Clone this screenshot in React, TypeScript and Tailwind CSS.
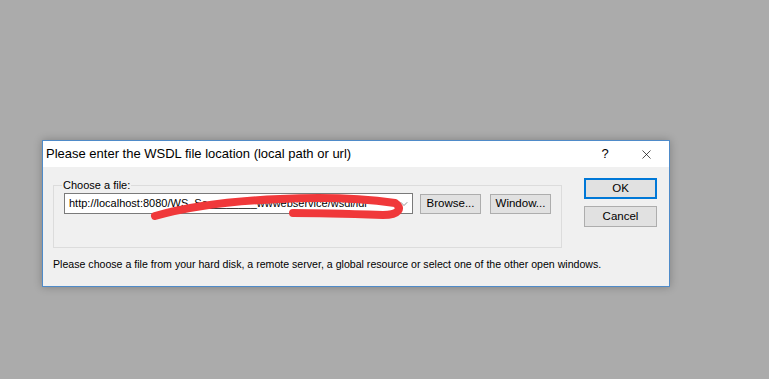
import { X, ChevronDown } from 'lucide-react'

const font = { fontFamily: '"Liberation Sans", Arial, sans-serif' }

function Button({ label, primary }: { label: string; primary?: boolean }) {
  return (
    <div
      className={
        'flex h-full items-center justify-center bg-[#e1e1e1] text-[11.5px] text-black ' +
        (primary ? 'border-2 border-[#0078d7]' : 'border border-[#adadad]')
      }
    >
      {label}
    </div>
  )
}

export default function App() {
  return (
    <div className="h-[379px] w-[769px] bg-[#ababab] pl-[42px] pt-[140px]" style={font}>
      <div className="flex h-[147px] w-[628px] flex-col border border-[#4f8bc9] bg-[#f0f0f0] shadow-[0_0_8px_rgba(0,0,0,0.25)]">
        {/* Title bar */}
        <div className="flex h-[26px] items-center bg-white pl-[3px] pr-[15px]">
          <span className="flex-1 text-[13px] text-black">Please enter the WSDL file location (local path or url)</span>
          <span className="w-[12px] text-center text-[13px] text-black">?</span>
          <X className="ml-[28px] h-[15px] w-[15px] text-black" strokeWidth={1.1} />
        </div>

        {/* Body */}
        <div className="flex flex-1 flex-col px-[10px]">
          <div className="flex pt-[12px]">
            <fieldset className="h-[69px] w-[509px] border border-[#dcdcdc] px-[10px] pt-[2px]">
              <legend className="ml-[-2px] px-[1px] text-[11px] leading-[12px] text-black">Choose a file:</legend>
              <div className="flex items-center">
                <div className="relative flex h-[21px] w-[349px] items-center border border-[#7a7a7a] bg-white pl-[4px]">
                  <span className="flex-1 whitespace-nowrap text-[11px] text-black">
                    http://localhost:8080/WS_Se________wwwebservice/wsdl/ldl
                  </span>
                  <div className="flex h-full w-[16px] items-center justify-center bg-white">
                    <ChevronDown className="h-[12px] w-[12px] text-[#555]" strokeWidth={1.3} />
                  </div>
                  <svg className="absolute left-0 top-0 overflow-visible" width="349" height="21">
                    <path
                      d="M90,22 C125,12 165,7 215,5 C255,3 295,4 330,9 C338,14 334,21 318,21 C288,20 258,19 228,19"
                      fill="none"
                      stroke="#f0383a"
                      strokeWidth="8"
                      strokeLinecap="round"
                      strokeLinejoin="round"
                    />
                  </svg>
                </div>
                <div className="ml-[7px] h-[20px] w-[61px]">
                  <Button label="Browse..." />
                </div>
                <div className="ml-[9px] h-[20px] w-[61px]">
                  <Button label="Window..." />
                </div>
              </div>
            </fieldset>
            <div className="ml-[22px] mt-[-1px] flex w-[73px] flex-col gap-[7px]">
              <div className="h-[21px]">
                <Button label="OK" primary />
              </div>
              <div className="h-[21px]">
                <Button label="Cancel" />
              </div>
            </div>
          </div>
          <div className="pt-[9px] text-[10.6px] text-black">
            Please choose a file from your hard disk, a remote server, a global resource or select one of the other open windows.
          </div>
        </div>
      </div>
    </div>
  )
}
